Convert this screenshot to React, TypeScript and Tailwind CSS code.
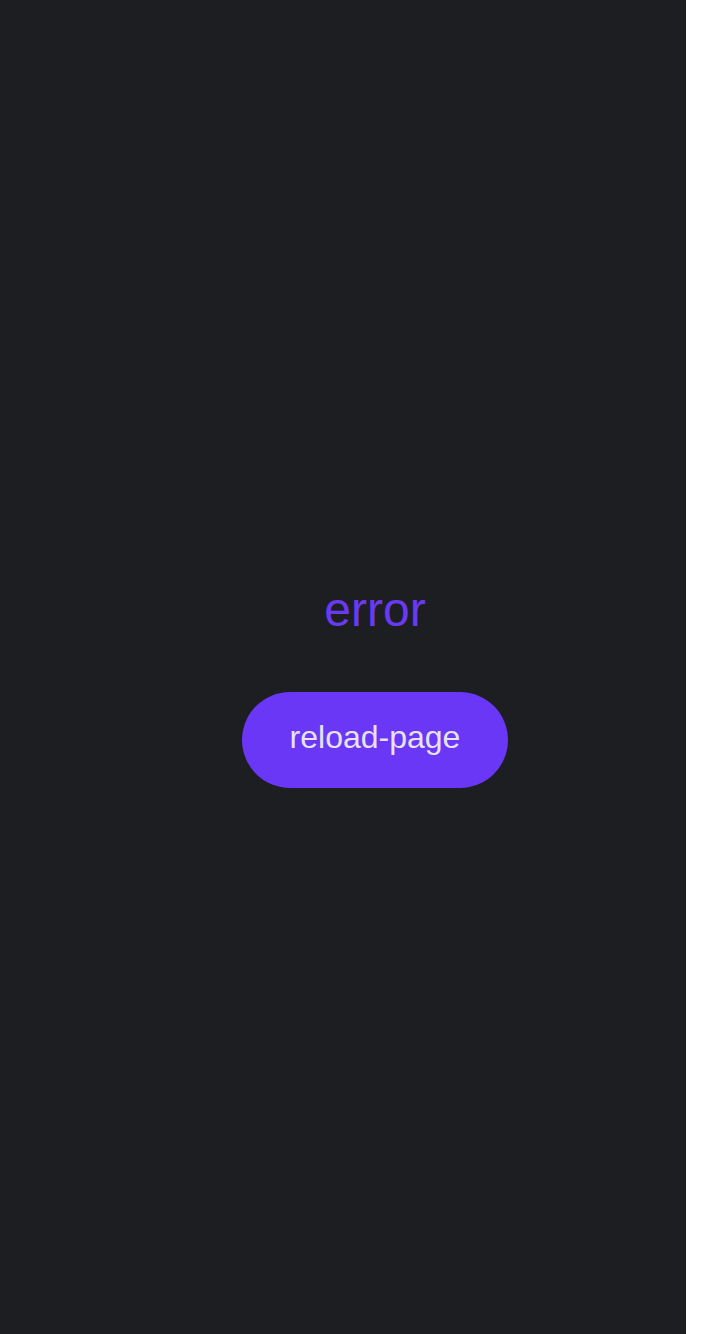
import React from 'react';

export default function App() {
  return (
    <div className="flex min-h-screen w-full bg-white" style={{ fontFamily: '"Liberation Sans", Arial, sans-serif' }}>
      <div className="h-[1334px] w-[686px] overflow-hidden bg-[#1d1e22]">
        <div className="flex w-[750px] flex-col items-center pt-[574px]">
          <div className="text-[48px] leading-[72px] text-[#6a3af2]">error</div>
          <button
            onClick={() => window.location.reload()}
            className="mt-[46px] flex h-[96px] items-center justify-center rounded-full bg-[#6937f5] px-[48px] pb-[6px] text-[32px] text-[#e6e2ee]"
          >
            reload-page
          </button>
        </div>
      </div>
    </div>
  );
}
